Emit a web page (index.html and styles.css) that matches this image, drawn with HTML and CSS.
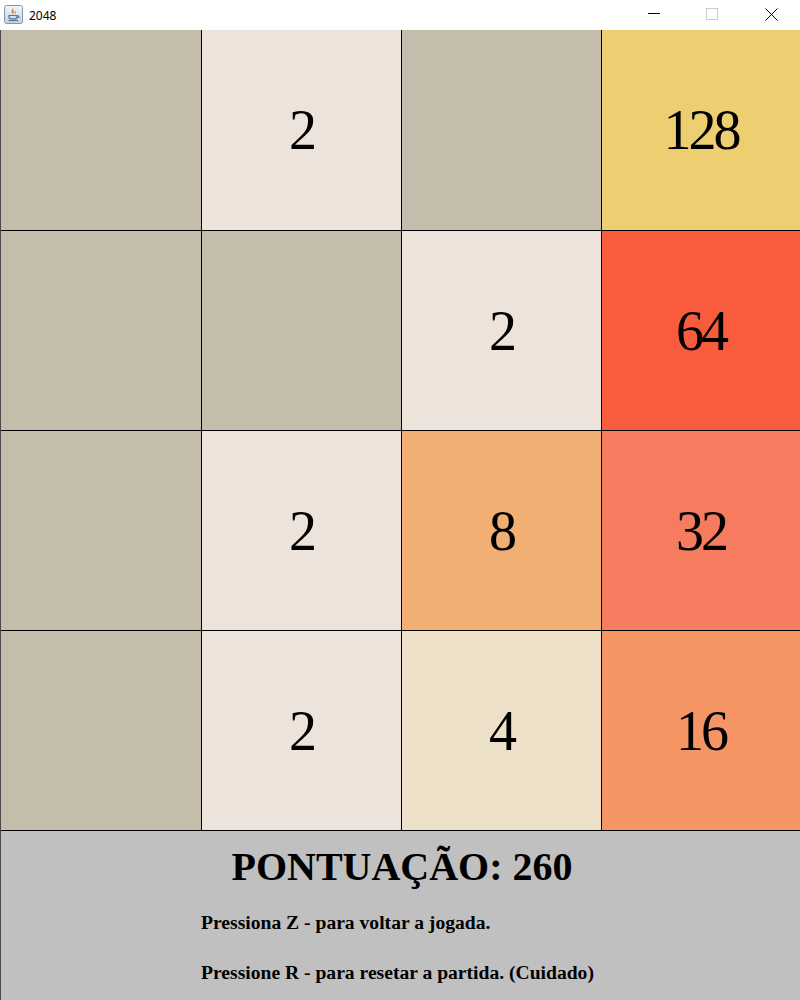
FILE: index.html
```html
<!Doctype html>
<html lang="en">
<head>
	<meta charset="utf-8">
	<title>2048</title>
	<link rel="stylesheet" href="styles.css">
</head>
<body>
	<div class="titlebar">
		<svg class="app_icon" width="20" height="20" viewBox="0 0 20 20">
			<defs>
				<linearGradient id="icon_bg" x1="0" y1="0" x2="0" y2="1">
					<stop offset="0" stop-color="#f4f7fa"/>
					<stop offset="1" stop-color="#c3d0dc"/>
				</linearGradient>
			</defs>
			<rect x="0.5" y="0.5" width="18" height="18" rx="2" fill="url(#icon_bg)" stroke="#7d99b3"/>
			<path d="M10 2.5 C8 5 11 6 9 9 C7 7.5 7 5 10 2.5 Z M12 5 C11 6.5 12.5 7.5 11 9.5 C10.2 8 10.5 6 12 5 Z" fill="#e8792b"/>
			<path d="M5 10.5 H13 V12 C13 13.5 11 14 9 14 C7 14 5 13.5 5 12 Z" fill="none" stroke="#55779a" stroke-width="1.2"/>
			<path d="M13 11 H15 V12.5 H13" fill="none" stroke="#55779a"/>
			<path d="M4.5 15.5 H14" stroke="#55779a" stroke-width="1.2"/>
		</svg>
		<span class="app_name">2048</span>
		<svg class="win_buttons" width="170" height="30" viewBox="0 0 170 30">
			<path d="M18 13.5 H30" stroke="#000" fill="none"/>
			<rect x="76.5" y="8.5" width="11" height="11" stroke="#ccc" fill="none"/>
			<path d="M135.5 8.5 L147.5 20.5 M147.5 8.5 L135.5 20.5" stroke="#000" fill="none"/>
		</svg>
	</div>

	<div class="window">
		<div class="board">
			<div class="cell empty"></div>
			<div class="cell t2">2</div>
			<div class="cell empty"></div>
			<div class="cell t128">128</div>

			<div class="cell empty"></div>
			<div class="cell empty"></div>
			<div class="cell t2">2</div>
			<div class="cell t64">64</div>

			<div class="cell empty"></div>
			<div class="cell t2">2</div>
			<div class="cell t8">8</div>
			<div class="cell t32">32</div>

			<div class="cell empty"></div>
			<div class="cell t2">2</div>
			<div class="cell t4">4</div>
			<div class="cell t16">16</div>
		</div>

		<div class="panel">
			<h1 class="score">PONTUAÇÃO: 260</h1>
			<p class="hint">Pressiona Z - para voltar a jogada.</p>
			<p class="hint">Pressione R - para resetar a partida. (Cuidado)</p>
		</div>
	</div>
</body>
</html>
```

FILE: styles.css
```css
html, body {
	margin: 0;
	padding: 0;
}

body {
	width: 800px;
	height: 1000px;
	overflow: hidden;
	font-family: "Liberation Serif", "Times New Roman", serif;
	color: #000;
	background: #c0c0c0;
}

.titlebar {
	height: 30px;
	display: flex;
	align-items: center;
	background: #fff;
}

.app_icon {
	margin-left: 4px;
}

.app_name {
	margin-left: 5px;
	font-family: "Noto Sans", "Open Sans", sans-serif;
	font-size: 12px;
}

.win_buttons {
	margin-left: auto;
}

.window {
	border-left: 1px solid #4a4a4a;
}

.board {
	display: grid;
	grid-template-columns: 201px 200px 200px 198px;
	grid-template-rows: 201px 200px 200px 200px;
}

.cell {
	display: flex;
	align-items: center;
	justify-content: center;
	font-size: 56px;
	letter-spacing: -3px;
	border-right: 1px solid #000;
	border-bottom: 1px solid #000;
}

.cell:nth-child(4n) {
	border-right: 0;
}

.empty { background: #c4bdab; }
.t2 { background: #eee3da; }
.t4 { background: #ede0c8; }
.t8 { background: #f1af74; }
.t16 { background: #f59563; }
.t32 { background: #f67c5f; }
.t64 { background: #f95c3c; }
.t128 { background: #edcf72; }

.panel {
	height: 169px;
}

.score {
	margin: 0;
	padding: 13px 0 0 3px;
	font-size: 40px;
	line-height: 46px;
	font-weight: bold;
	text-align: center;
}

.hint {
	margin: 0 0 0 200px;
	padding-top: 29px;
	font-size: 19.6px;
	line-height: 21px;
	font-weight: bold;
}

.score + .hint {
	padding-top: 22px;
}
```
